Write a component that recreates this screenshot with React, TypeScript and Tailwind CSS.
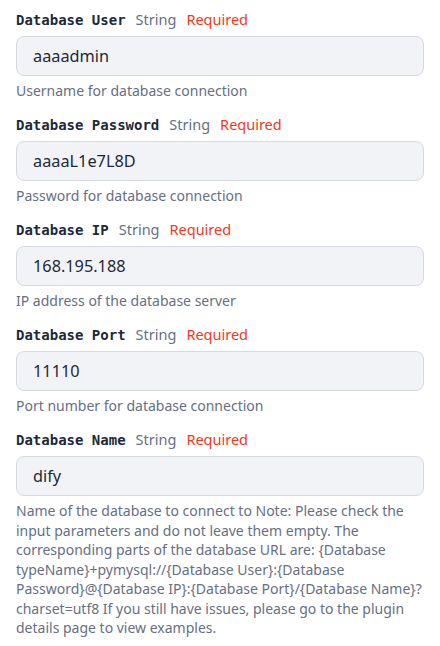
import React from 'react';

const FIELDS = [
  { label: 'Database User', value: 'aaaadmin', desc: 'Username for database connection' },
  { label: 'Database Password', value: 'aaaaL1e7L8D', desc: 'Password for database connection' },
  { label: 'Database IP', value: '168.195.188', desc: 'IP address of the database server' },
  { label: 'Database Port', value: '11110', desc: 'Port number for database connection' },
  {
    label: 'Database Name',
    value: 'dify',
    desc: 'Name of the database to connect to Note: Please check the input parameters and do not leave them empty. The corresponding parts of the database URL are: {Database typeName}+pymysql://{Database User}:{Database Password}@{Database IP}:{Database Port}/{Database Name}?charset=utf8 If you still have issues, please go to the plugin details page to view examples.',
  },
];

export default function App() {
  return (
    <div className="w-[440px] h-[646px] bg-white px-4 pt-[10px] flex flex-col gap-[14.5px] font-['Noto_Sans',sans-serif]">
      {FIELDS.map((f) => (
        <div key={f.label} className="flex flex-col">
          <div className="flex items-center h-5 gap-[10px] text-[14.5px]">
            <span className="font-['DejaVu_Sans_Mono',monospace] font-bold text-[#1d2939] text-[14px]">{f.label}</span>
            <span className="text-[#676f83]">String</span>
            <span className="text-[#f03a1a]">Required</span>
          </div>
          <div className="mt-[6px] h-10 rounded-lg border border-[#d6d9df] bg-[#f2f3f6] flex items-center px-4 text-[16.3px] text-[#1d2939]">
            {f.value}
          </div>
          <p className="mt-[5px] text-[14px] leading-[19.5px] text-[#676f83]">{f.desc}</p>
        </div>
      ))}
    </div>
  );
}
